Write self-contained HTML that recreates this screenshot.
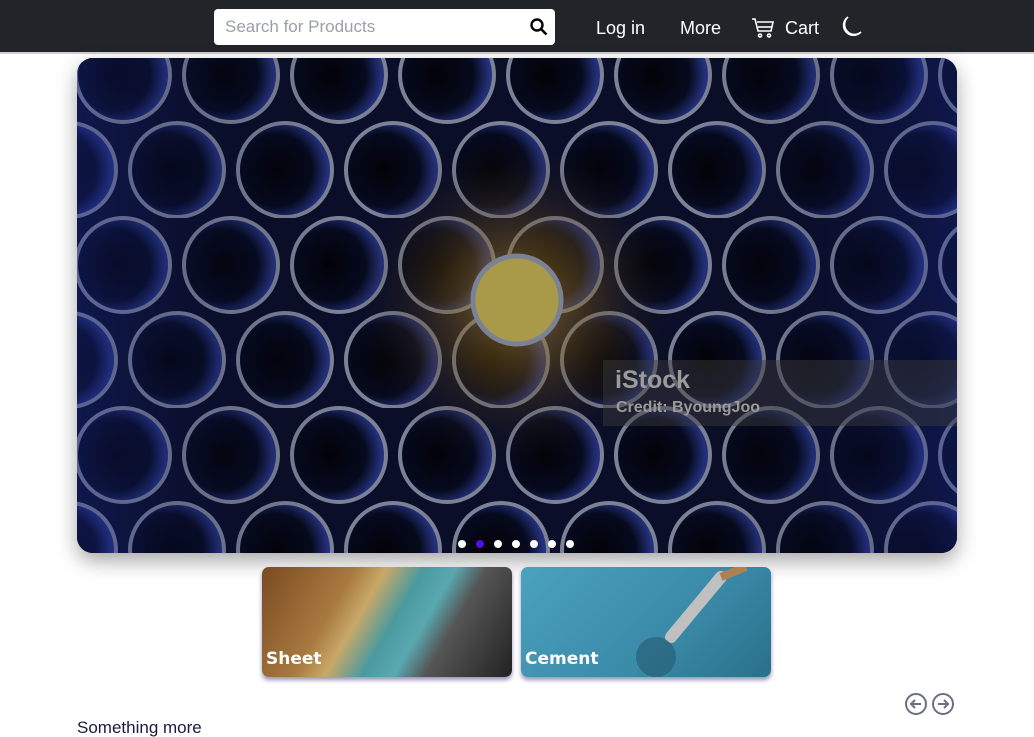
<!DOCTYPE html>
<html><head><meta charset="utf-8">
<style>
*{box-sizing:border-box;margin:0;padding:0}
body{width:1034px;height:728px;overflow:hidden;background:#fff;font-family:"Liberation Sans","DejaVu Sans",sans-serif;position:relative}
.nav{position:absolute;left:0;top:0;width:1034px;height:54px;background:#212529;border-bottom:2px solid #cfcfcf}
.search{position:absolute;left:214px;top:9px;width:341px;height:36px;background:#fff;border-radius:4px}
.search span{position:absolute;left:11px;top:9px;font-size:17px;line-height:18px;color:#9aa0a8}
.nav .l{position:absolute;top:18px;color:#fff;font-size:18px;line-height:20px}
.car{position:absolute;left:77px;top:58px;width:880px;height:495px;border-radius:16px;overflow:hidden;box-shadow:0 8px 20px rgba(0,0,0,.35);background:#06081a}
.wm{position:absolute;left:526px;top:302px;width:354px;height:66px;background:rgba(60,60,60,.45)}
.wm b{position:absolute;left:12px;top:7px;font-size:25px;line-height:26px;color:#9b9b9b}
.wm i{position:absolute;left:13px;top:40px;font-size:16px;line-height:16px;color:#9b9b9b;font-style:normal;font-weight:bold}
.dots{position:absolute;left:381px;top:482px;display:flex;gap:10px}
.dots span{width:8px;height:8px;border-radius:50%;background:#fff}
.card{position:absolute;top:567px;width:250px;height:110px;border-radius:7px;overflow:hidden;box-shadow:0 3px 4px rgba(90,70,140,.6)}
.card span{position:absolute;left:4px;bottom:9px;color:#fff;font-weight:bold;font-size:17px;line-height:18px;font-family:"DejaVu Sans",sans-serif}
</style></head><body>
<div class="nav">
 <div class="search"><span>Search for Products</span>
  <svg style="position:absolute;left:316px;top:9px" width="18" height="18" viewBox="0 0 18 18"><circle cx="7" cy="7" r="5.5" fill="none" stroke="#000" stroke-width="2.4"/><path d="M11 11l5.5 5.5" stroke="#000" stroke-width="2.6"/></svg>
 </div>
 <div class="l" style="left:596px">Log in</div>
 <div class="l" style="left:680px">More</div>
 <svg style="position:absolute;left:751px;top:17px" width="24" height="22" viewBox="0 0 24 22" fill="none" stroke="#fff" stroke-width="1.6"><path d="M1 2h3l3 12h13l2-9H6"/><path d="M7 10h14"/><circle cx="9" cy="18.5" r="1.5"/><circle cx="18" cy="18.5" r="1.5"/></svg>
 <div class="l" style="left:785px">Cart</div>
 <svg style="position:absolute;left:839px;top:15px" width="24" height="24" viewBox="0 0 24 24" fill="none" stroke="#fff" stroke-width="1.6"><path d="M9 2A10 10 0 1 0 22 17 9 9 0 0 1 9 2z"/></svg>
</div>
<div class="car">
 <svg width="880" height="495" viewBox="0 0 880 495">
  <defs>
   <radialGradient id="g" cx="50%" cy="50%" r="50%"><stop offset="0" stop-color="#c8a040"/><stop offset=".4" stop-color="#7a5818" stop-opacity=".7"/><stop offset="1" stop-color="#06081a" stop-opacity="0"/></radialGradient>
   <radialGradient id="t" cx="40%" cy="50%" r="55%"><stop offset="0" stop-color="#020208"/><stop offset=".7" stop-color="#060a1e"/><stop offset="1" stop-color="#24307a"/></radialGradient>
   <pattern id="p" width="108" height="190" patternUnits="userSpaceOnUse" x="-8" y="-30">
    <circle cx="54" cy="47" r="47" fill="url(#t)" stroke="#7c8296" stroke-width="4"/>
    <circle cx="0" cy="142" r="47" fill="url(#t)" stroke="#7c8296" stroke-width="4"/>
    <circle cx="108" cy="142" r="47" fill="url(#t)" stroke="#7c8296" stroke-width="4"/>
    <circle cx="54" cy="237" r="47" fill="url(#t)" stroke="#7c8296" stroke-width="4"/>
   </pattern>
   <linearGradient id="side" x1="0" x2="1"><stop offset="0" stop-color="#1a2a90" stop-opacity=".35"/><stop offset=".3" stop-color="#000" stop-opacity="0"/><stop offset=".7" stop-color="#000" stop-opacity="0"/><stop offset="1" stop-color="#1a2a90" stop-opacity=".35"/></linearGradient>
  </defs>
  <rect width="880" height="495" fill="#0a0e28"/>
  <rect width="880" height="495" fill="url(#p)"/>
  <rect width="880" height="495" fill="url(#side)"/>
  <circle cx="440" cy="245" r="170" fill="url(#g)" opacity=".6"/>
  <circle cx="440" cy="242" r="44" fill="#a89a48" stroke="#7c8296" stroke-width="5"/>
 </svg>
 <div class="wm"><b>iStock</b><i>Credit: ByoungJoo</i></div>
 <div class="dots"><span></span><span style="background:#5010e0"></span><span></span><span></span><span></span><span></span><span></span></div>
</div>
<div class="card" style="left:262px;background:linear-gradient(120deg,#7a4a20 0%,#a87a40 30%,#c8a868 40%,#4a9aa0 52%,#5aa8b0 62%,#555 72%,#222 100%)"><span>Sheet</span></div>
<div class="card" style="left:521px;background:linear-gradient(135deg,#4aa2bd,#3a8aa8 60%,#2a708a)"><svg style="position:absolute;left:0;top:0" width="250" height="110"><path d="M150 70L200 10" stroke="#c0c0c0" stroke-width="12" stroke-linecap="round"/><path d="M200 10l25-10" stroke="#b08050" stroke-width="8"/><circle cx="135" cy="90" r="20" fill="#245a70" opacity=".6"/></svg><span>Cement</span></div>
<svg style="position:absolute;left:905px;top:692px" width="50" height="24" viewBox="0 0 50 24" fill="none" stroke="#6b6f80" stroke-width="2"><circle cx="11" cy="12" r="10"/><path d="M16 12H7M10 8l-4 4 4 4"/><circle cx="38" cy="12" r="10"/><path d="M33 12h9M39 8l4 4-4 4"/></svg>
<div style="position:absolute;left:77px;top:719px;font-size:17px;line-height:18px;color:#1a1a40">Something more</div>
</body></html>
